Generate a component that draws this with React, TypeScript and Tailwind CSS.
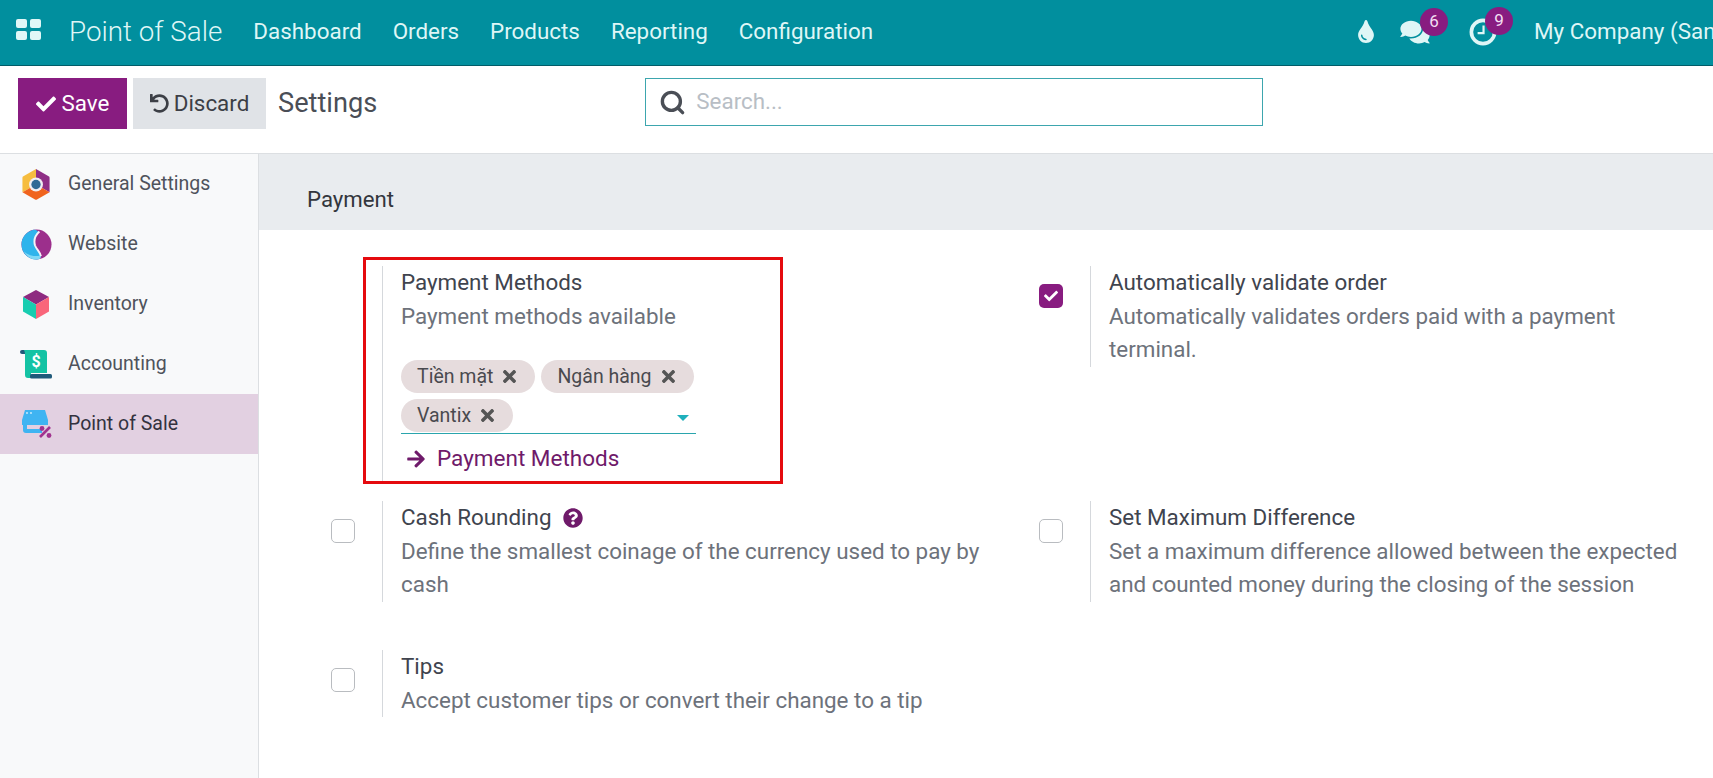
import React from 'react';
import { FaArrowRight, FaCheck, FaComments, FaQuestionCircle, FaTimes, FaTint, FaUndo } from 'react-icons/fa';
import { Search } from 'lucide-react';

const menus = ['Dashboard', 'Orders', 'Products', 'Reporting', 'Configuration'];

const GeneralIcon = () => (
  <svg viewBox="0 0 28 32" className="w-[28px] h-[31px]">
    <path d="M14 0 L1 7.5 Q0 8 0 9 V24 L14 16 Z" fill="#f6bd3f" />
    <path d="M14 0 L27 7.5 Q28 8 28 9 V24 L14 16 Z" fill="#8f2f86" />
    <path d="M0 24 L14 16 L28 24 L15 31.5 Q14 32 13 31.5 Z" fill="#f0641e" />
    <circle cx="14" cy="16" r="7.2" fill="#f1eff3" />
    <circle cx="14" cy="16" r="4.8" fill="#2f6a96" />
  </svg>
);

const WebsiteIcon = () => (
  <svg viewBox="0 0 32 32" className="w-[31px] h-[31px]">
    <circle cx="16" cy="16" r="15.5" fill="#9c2f8c" />
    <path d="M12 1 C5 3 0.5 9 0.5 16 C0.5 25 7.5 31.5 16 31.5 C19 31.5 21 30 20.5 27 C20 24 16 21 14.5 17 C13 12 14 7 18 3 C16.5 1 14 0.5 12 1 Z" fill="#2fb4ec" />
    <path d="M3 23 C6 29 11 31.5 16 31.5 C19 31.5 21 30 20.5 27 C15 29 8 28 3 23 Z" fill="#7fd8f6" />
    <path d="M19 2.5 C14 7 13 12 14.5 17 C16 21 20 24 20.5 28" fill="none" stroke="#f6f1f7" strokeWidth="2" />
  </svg>
);

const InventoryIcon = () => (
  <svg viewBox="0 0 26 29" className="w-[26px] h-[29px]">
    <path d="M13 0 L26 7 L13 14.5 L0 7 Z" fill="#8e2a80" />
    <path d="M0 7 L13 14.5 L13 29 L0 21.5 Z" fill="#18cdb0" />
    <path d="M26 7 L13 14.5 L13 29 L26 21.5 Z" fill="#f9667a" />
  </svg>
);

const AccountingIcon = () => (
  <svg viewBox="0 0 32 30" className="w-[32px] h-[30px]">
    <rect x="0" y="1" width="8" height="4" rx="2" fill="#1f5a7a" />
    <path d="M4 1 H24 Q27 1 27 4 V24 H11 V29 H8 Q5 29 5 26 V5 Q5 3 4 1 Z" fill="#14c3a4" />
    <rect x="10" y="25" width="22" height="4.5" rx="1.5" fill="#1f5a7a" />
    <text x="16" y="18" textAnchor="middle" fontSize="16" fontWeight="700" fill="#ffffff" fontFamily="Roboto, sans-serif">$</text>
  </svg>
);

const PosIcon = () => (
  <svg viewBox="0 0 31 28" className="w-[31px] h-[28px]">
    <path d="M4 0 H24 L27 10 V15 H1 V10 Z" fill="#3fb4f2" />
    <path d="M2 15 H6 V19 H21 V23 H5 Q2 23 2 20 Z" fill="#3fb4f2" />
    <circle cx="6" cy="3" r="0.9" fill="#d6effc" />
    <circle cx="10" cy="3" r="0.9" fill="#d6effc" />
    <path d="M19 27 L29 17" stroke="#a1338f" strokeWidth="2.6" />
    <circle cx="21" cy="18.5" r="2.4" fill="#a1338f" />
    <circle cx="28" cy="25.5" r="2.4" fill="#a1338f" />
  </svg>
);

const sidebar = [
  { label: 'General Settings', icon: <GeneralIcon /> },
  { label: 'Website', icon: <WebsiteIcon /> },
  { label: 'Inventory', icon: <InventoryIcon /> },
  { label: 'Accounting', icon: <AccountingIcon /> },
  { label: 'Point of Sale', icon: <PosIcon />, active: true },
];

const Badge = ({ n, className }: { n: number; className: string }) => (
  <span className={`absolute -top-[11px] w-[28px] h-[28px] rounded-full bg-[#881c80] text-[#f3dff2] text-[17px] flex items-center justify-center ${className}`}>
    {n}
  </span>
);

const Tag = ({ label }: { label: string }) => (
  <span className="h-[33px] pl-[16px] pr-[16px] rounded-full bg-[#e6dcdd] text-[#4a4a4f] flex items-center gap-[7px] text-[19.5px]">
    <span className="pt-[1px]">{label}</span>
    <FaTimes className="w-[19px] h-[19px] text-[#555]" />
  </span>
);

const Check = ({ on }: { on?: boolean }) =>
  on ? (
    <span className="w-[24px] h-[24px] rounded-[5px] bg-[#881c80] flex items-center justify-center">
      <FaCheck className="w-[14px] h-[14px] text-white" />
    </span>
  ) : (
    <span className="w-[24px] h-[24px] rounded-[5px] border border-[#b9bcc0] bg-white block" />
  );

const Setting = ({ on, title, help, desc, children }: { on?: boolean; title: string; help?: boolean; desc: string; children?: React.ReactNode }) => (
  <div className="flex items-start">
    <div className="w-[51px] shrink-0 pt-[18px]">{children === undefined ? <Check on={on} /> : null}</div>
    <div className="border-l border-[#d5d8dc] pl-[18px] w-[600px]">
      <div className="text-[22.4px] leading-[33.5px] text-[#40444e] flex items-center gap-[12px]">
        {title}
        {help && <FaQuestionCircle className="w-[20px] h-[20px] text-[#6f1a6a]" />}
      </div>
      <div className="text-[22.4px] leading-[33.5px] text-[#6d727b]">{desc}</div>
      {children}
    </div>
  </div>
);

export default function App() {
  return (
    <div className="w-[1713px] h-[778px] overflow-hidden bg-white flex flex-col font-['Roboto',sans-serif]">
      <header className="h-[66px] shrink-0 bg-[#018f9e] border-b border-[#015c68] flex items-center whitespace-nowrap text-[#dff6f6] pl-[16px] pb-[2px]">
        <svg viewBox="0 0 25 21" className="w-[25px] h-[21px] shrink-0 -mt-[4px]">
          <rect x="0" y="0" width="11" height="9" rx="2" fill="#e0f7f7" />
          <rect x="14" y="0" width="11" height="9" rx="2" fill="#e0f7f7" />
          <rect x="0" y="12" width="11" height="9" rx="2" fill="#e0f7f7" />
          <rect x="14" y="12" width="11" height="9" rx="2" fill="#e0f7f7" />
        </svg>
        <span className="ml-[28px] text-[27.8px] font-light">Point of Sale</span>
        {menus.map((m) => (
          <span key={m} className="ml-[31px] text-[22.4px]">
            {m}
          </span>
        ))}
        <FaTint className="ml-[484px] w-[18px] h-[23px] shrink-0" />
        <span className="relative ml-[25px] shrink-0">
          <FaComments className="w-[30px] h-[26px]" />
          <Badge n={6} className="left-[20px]" />
        </span>
        <span className="relative ml-[39px] shrink-0">
          <svg viewBox="0 0 26 26" className="w-[28px] h-[28px]">
            <circle cx="13" cy="13" r="10.8" fill="none" stroke="currentColor" strokeWidth="3.4" />
            <path d="M13.5 7 V14 H8" fill="none" stroke="currentColor" strokeWidth="2" />
          </svg>
          <Badge n={9} className="left-[16px]" />
        </span>
        <span className="ml-[37px] text-[22.4px]">My Company (San Francisco)</span>
      </header>

      <div className="h-[88px] shrink-0 border-b border-[#dcdfe2] flex items-start pt-[12px] pl-[18px] relative">
        <button className="w-[109px] h-[51px] bg-[#881c80] text-white text-[22.4px] flex items-center justify-center gap-[6px]">
          <FaCheck className="w-[20px] h-[20px]" />
          Save
        </button>
        <button className="ml-[6px] w-[133px] h-[51px] bg-[#e0e3e7] text-[#3c3f46] text-[22.4px] flex items-center justify-center gap-[5px]">
          <FaUndo className="w-[19px] h-[19px]" />
          Discard
        </button>
        <span className="ml-[12px] h-[51px] flex items-center text-[27.2px] text-[#4a4e56]">Settings</span>
        <div className="ml-[268px] w-[618px] h-[48px] border border-[#3da6ae] flex items-center pl-[13px] gap-[10px]">
          <Search className="w-[27px] h-[27px] text-[#4a4e56]" strokeWidth={3} />
          <span className="text-[22.4px] text-[#b8bec5]">Search...</span>
        </div>
      </div>

      <div className="flex-1 flex min-h-0">
        <aside className="w-[259px] shrink-0 bg-[#f8f9fa] border-r border-[#dcdfe2]">
          {sidebar.map((s) => (
            <div key={s.label} className={`h-[60px] flex items-center ${s.active ? 'bg-[#e2d0e1] text-[#33323f]' : 'text-[#4f535c]'}`}>
              <span className="w-[68px] shrink-0 flex items-center justify-center pl-[4px]">{s.icon}</span>
              <span className="text-[19.5px] -mt-[1px]">{s.label}</span>
            </div>
          ))}
        </aside>
        <main className="flex-1 min-w-0">
          <div className="h-[76px] bg-[#e9ecef] flex items-center pl-[48px] pt-[16px] text-[22.2px] text-[#33363d]">Payment</div>
          <div className="relative pl-[72px] pt-[36px] grid grid-cols-[708px_708px] grid-rows-[235px_149px_auto]">
            <Setting title="Payment Methods" desc="Payment methods available">
              <div className="mt-[27px] w-[295px] border-b border-[#2aa5ad] pb-[1px] relative">
                <div className="flex flex-wrap gap-x-[6px] gap-y-[6px]">
                  <Tag label="Tiền mặt" />
                  <Tag label="Ngân hàng" />
                  <Tag label="Vantix" />
                </div>
                <span className="absolute right-[7px] bottom-[12px] w-0 h-0 border-l-[6px] border-r-[6px] border-t-[6px] border-l-transparent border-r-transparent border-t-[#1fb0bc]" />
              </div>
              <div className="mt-[3px] h-[44px] flex items-center gap-[11px] text-[22.5px] text-[#6f1a6a] pl-[5px]">
                <FaArrowRight className="w-[20px] h-[20px]" />
                Payment Methods
              </div>
            </Setting>
            <div className="self-start">
              <Setting on title="Automatically validate order" desc="Automatically validates orders paid with a payment terminal." />
            </div>
            <Setting title="Cash Rounding" help desc="Define the smallest coinage of the currency used to pay by cash" />
            <Setting title="Set Maximum Difference" desc="Set a maximum difference allowed between the expected and counted money during the closing of the session" />
            <Setting title="Tips" desc="Accept customer tips or convert their change to a tip" />
            <div className="absolute left-[104px] top-[27px] w-[420px] h-[227px] border-[3px] border-[#e50a0f] pointer-events-none" />
          </div>
        </main>
      </div>
    </div>
  );
}
